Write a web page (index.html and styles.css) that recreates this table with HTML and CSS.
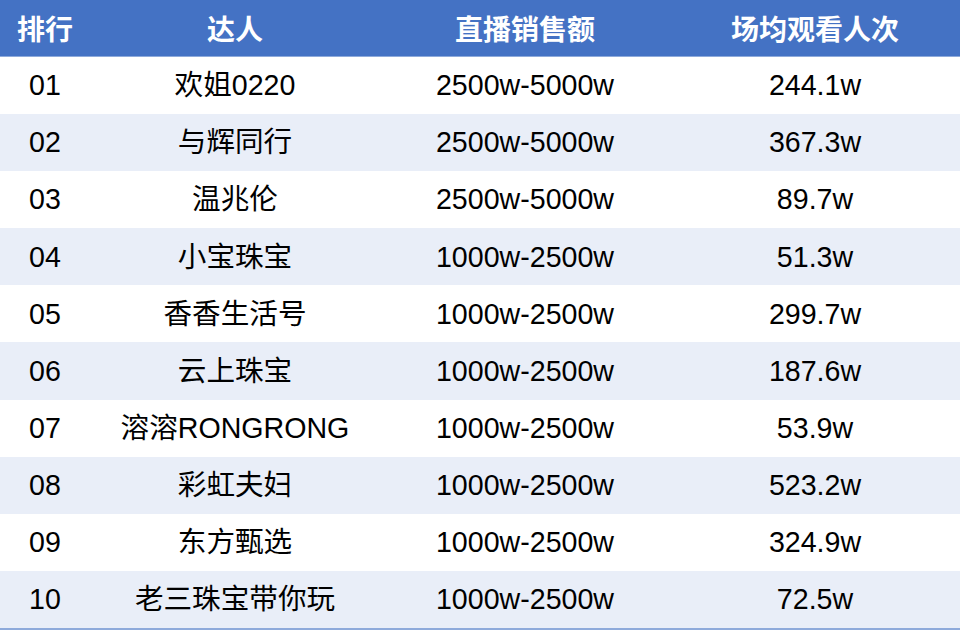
FILE: index.html
```html
<!DOCTYPE html>
<html lang="zh-CN">
<head>
<meta charset="utf-8">
<title>达人排行</title>
<link rel="stylesheet" href="styles.css">
</head>
<body>
<div class="board">
  <div class="row head">
    <div class="cell">排行</div>
    <div class="cell">达人</div>
    <div class="cell">直播销售额</div>
    <div class="cell">场均观看人次</div>
  </div>
  <div class="row">
    <div class="cell">01</div><div class="cell">欢姐0220</div><div class="cell">2500w-5000w</div><div class="cell">244.1w</div>
  </div>
  <div class="row alt">
    <div class="cell">02</div><div class="cell">与辉同行</div><div class="cell">2500w-5000w</div><div class="cell">367.3w</div>
  </div>
  <div class="row">
    <div class="cell">03</div><div class="cell">温兆伦</div><div class="cell">2500w-5000w</div><div class="cell">89.7w</div>
  </div>
  <div class="row alt">
    <div class="cell">04</div><div class="cell">小宝珠宝</div><div class="cell">1000w-2500w</div><div class="cell">51.3w</div>
  </div>
  <div class="row">
    <div class="cell">05</div><div class="cell">香香生活号</div><div class="cell">1000w-2500w</div><div class="cell">299.7w</div>
  </div>
  <div class="row alt">
    <div class="cell">06</div><div class="cell">云上珠宝</div><div class="cell">1000w-2500w</div><div class="cell">187.6w</div>
  </div>
  <div class="row">
    <div class="cell">07</div><div class="cell">溶溶RONGRONG</div><div class="cell">1000w-2500w</div><div class="cell">53.9w</div>
  </div>
  <div class="row alt">
    <div class="cell">08</div><div class="cell">彩虹夫妇</div><div class="cell">1000w-2500w</div><div class="cell">523.2w</div>
  </div>
  <div class="row">
    <div class="cell">09</div><div class="cell">东方甄选</div><div class="cell">1000w-2500w</div><div class="cell">324.9w</div>
  </div>
  <div class="row alt">
    <div class="cell">10</div><div class="cell">老三珠宝带你玩</div><div class="cell">1000w-2500w</div><div class="cell">72.5w</div>
  </div>
</div>
</body>
</html>
```
FILE: styles.css
```css
html, body {
  margin: 0;
  padding: 0;
  background: #ffffff;
}
.board {
  width: 960px;
  height: 630px;
  display: flex;
  flex-direction: column;
  border-bottom: 2px solid #8eaadb;
  box-sizing: border-box;
  font-family: "Liberation Sans", Arial, "Noto Sans CJK SC", sans-serif;
  font-size: 28.6px;
  color: #000000;
}
.row {
  flex: 1 1 0;
  display: grid;
  grid-template-columns: 90px 290px 290px 290px;
  align-items: center;
  background: #ffffff;
}
.row.alt {
  background: #e9eef8;
}
.row.head {
  flex: 0 0 56px;
  background: #4472c4;
  border-bottom: 1px solid #8eaadb;
  color: #ffffff;
  font-weight: bold;
  font-family: "Noto Sans CJK SC", sans-serif;
  font-size: 28px;
}
.cell {
  text-align: center;
  white-space: nowrap;
  line-height: 1;
}
.head .cell {
  padding-bottom: 1px;
}
```
